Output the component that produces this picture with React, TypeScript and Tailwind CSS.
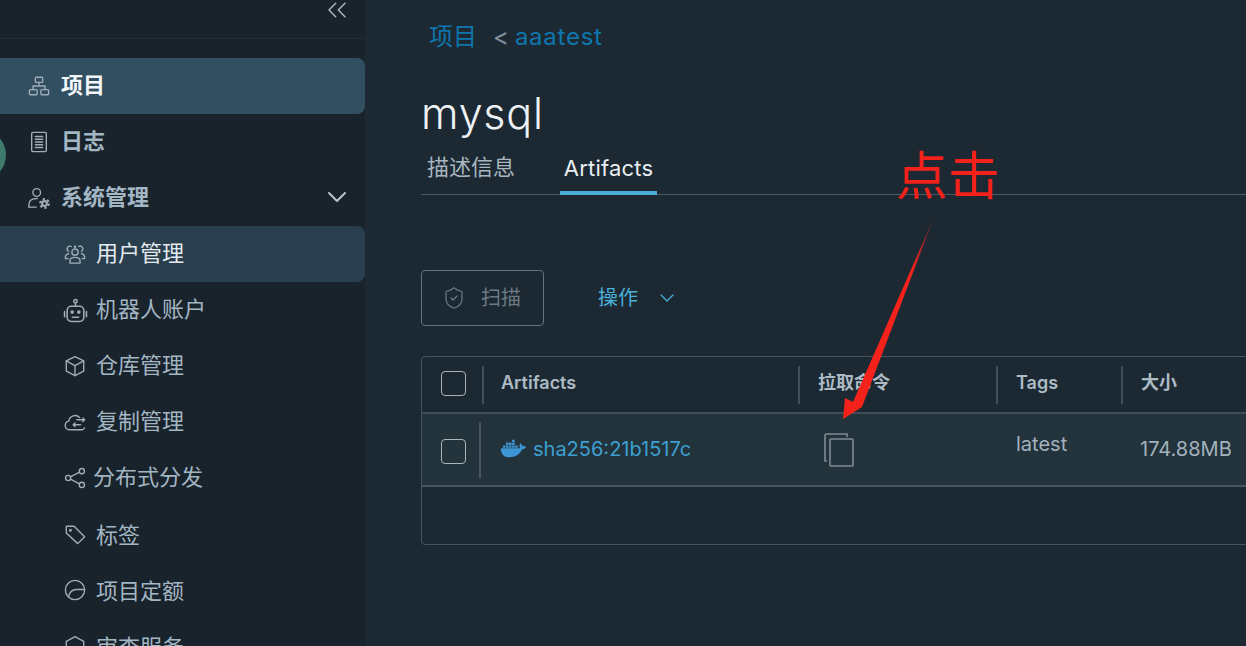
import React from "react";
import { ChevronDown, ChevronsLeft, ShieldCheck } from "lucide-react";
import { FaDocker } from "react-icons/fa";

const FONT = "font-['Inter','Noto_Sans_CJK_SC',sans-serif]";

type IconProps = { className?: string };
const base = {
  viewBox: "0 0 24 24",
  fill: "none",
  stroke: "currentColor",
  strokeWidth: 1.5,
  strokeLinecap: "round" as const,
  strokeLinejoin: "round" as const,
};

const NetworkIcon = ({ className }: IconProps) => (
  <svg {...base} className={className}>
    <rect x="8" y="2.5" width="8" height="5.5" rx="1" />
    <rect x="1.5" y="16" width="8.5" height="5.5" rx="1" />
    <rect x="14" y="16" width="8.5" height="5.5" rx="1" />
    <path d="M12 8v4M5.5 16v-4h13v4" />
  </svg>
);
const LogIcon = ({ className }: IconProps) => (
  <svg {...base} className={className}>
    <rect x="4" y="1.5" width="16" height="21" rx="1.5" />
    <path d="M8 6h8M8 9h8M8 12h8M8 15h8M8 18h8" />
  </svg>
);
const AdminIcon = ({ className }: IconProps) => (
  <svg {...base} className={className}>
    <circle cx="9.500" cy="6" r="4.200" />
    <path d="M1 22v-3c0-4 3.500-6.500 9-6.500" />
    <path d="M1 22h8" />
    <circle cx="18" cy="18" r="3.800" fill="currentColor" stroke="none" />
    <circle cx="18" cy="18" r="4.800" strokeWidth="2.200" strokeDasharray="2.500 2.500" strokeLinecap="butt" />
    <circle cx="18" cy="18" r="1.500" fill="#19232b" stroke="none" />
  </svg>
);
const UsersIcon = ({ className }: IconProps) => (
  <svg {...base} className={className}>
    <circle cx="12" cy="10" r="3.400" />
    <path d="M6.500 22v-2.500c0-2.500 2-3.800 5.500-3.800s5.500 1.300 5.500 3.800V22z" />
    <path d="M8 3.800a3 3 0 0 0-3 5.200M16 3.800a3 3 0 0 1 3 5.200M5 11.500c-2 .5-3.500 1.800-3.500 4v1.500h3M19 11.500c2 .5 3.500 1.800 3.500 4v1.500h-3" />
    <circle cx="12" cy="4" r=".6" />
  </svg>
);
const RobotIcon = ({ className }: IconProps) => (
  <svg {...base} className={className}>
    <circle cx="12" cy="3" r="1.600" />
    <path d="M12 4.600V8" />
    <rect x="4" y="8" width="16" height="14.500" rx="4" />
    <path d="M1.500 13v5M22.500 13v5M9 18.500h6" />
    <circle cx="8.800" cy="13.500" r="1" fill="currentColor" />
    <circle cx="15.200" cy="13.500" r="1" fill="currentColor" />
  </svg>
);
const BoxIcon = ({ className }: IconProps) => (
  <svg {...base} className={className}>
    <path d="M12 1.800 21.500 6.500v11L12 22.500 2.500 17.500v-11z" />
    <path d="M2.500 6.500 12 11.500l9.500-5M12 11.500v11" />
  </svg>
);
const CloudIcon = ({ className }: IconProps) => (
  <svg {...base} className={className}>
    <path d="M16 20.500H6a4.800 4.800 0 0 1-.8-9.500 7 7 0 0 1 11.800-4" />
    <path d="M16 20.500h3.500a3.500 3.500 0 0 0 2.800-2" />
    <path d="M14 9.500h8.500M20.500 7.500l2 2-2 2M18 15H10M12 13l-2 2 2 2" />
  </svg>
);
const ShareIcon = ({ className }: IconProps) => (
  <svg {...base} className={className}>
    <circle cx="19.500" cy="4.500" r="2.800" />
    <circle cx="4.500" cy="12" r="2.800" />
    <circle cx="19.500" cy="19.500" r="2.800" />
    <path d="M7 10.700l10-5M7 13.300l10 5" />
  </svg>
);
const TagIcon = ({ className }: IconProps) => (
  <svg {...base} className={className}>
    <path d="M2.500 3.500h8.500L22.500 15 15 22.500 2.500 11z" />
    <circle cx="7" cy="8" r=".9" />
  </svg>
);
const QuotaIcon = ({ className }: IconProps) => (
  <svg {...base} className={className}>
    <circle cx="12" cy="12" r="10.500" />
    <path d="M5 19.500c1-5 4-8 8.500-8H22" />
  </svg>
);
const HexIcon = ({ className }: IconProps) => (
  <svg {...base} className={className}>
    <path d="M12 1.800 21.500 7v10L12 22.500 2.500 17V7z" />
  </svg>
);
const CopyIcon = ({ className }: IconProps) => (
  <svg viewBox="0 0 30 34" fill="none" stroke="currentColor" strokeWidth="1.600" className={className}>
    <path d="M3 28H1V2.500A1.500 1.500 0 0 1 2.500 1H23v3" />
    <rect x="6" y="6" width="23" height="27" rx="1" />
  </svg>
);

type NavProps = {
  icon: React.ReactNode;
  label: string;
  active?: "top" | "sub";
  sub?: boolean;
  bold?: boolean;
  tight?: boolean;
  chevron?: boolean;
  low?: boolean;
};

function NavItem({ icon, label, active, sub, bold, tight, chevron, low }: NavProps) {
  return (
    <div
      className={`relative flex h-14 shrink-0 items-center rounded-r-lg text-[22px] ${
        sub ? "pl-[64px]" : "pl-[28px]"
      } ${active === "top" ? "bg-[#324f62] text-[#f4f7f9]" : ""} ${
        active === "sub" ? "bg-[#2a3f4e] text-[#e4ebf0]" : ""
      } ${!active ? "text-[#a3b6c4]" : ""} ${bold ? "font-bold" : ""}`}
    >
      <span className="flex h-[22px] w-[22px] shrink-0 items-center justify-center text-[#a0adb6]">{icon}</span>
      <span className={`${tight ? "ml-[7px]" : bold ? "ml-[11px]" : "ml-[10px]"} ${low ? "pt-[2px]" : "pb-[2px]"}`}>{label}</span>
      {chevron && <ChevronDown className="absolute right-[12px] top-[11px] h-8 w-8 text-[#b8c4cc]" strokeWidth={1.5} />}
    </div>
  );
}

const headCell = "flex h-[38px] items-center border-l-2 border-[#414f5a] pb-[4px]";

export default function App() {
  const ic = "h-[22px] w-[22px]";
  return (
    <div className={`relative flex h-[646px] w-[1246px] overflow-hidden bg-[#1c2933] ${FONT}`}>
      {/* sidebar */}
      <aside className="relative flex w-[365px] shrink-0 flex-col overflow-hidden bg-[#19232b]">
        <div className="flex h-[39px] shrink-0 items-start justify-end border-b border-[#212e38] pr-[12px]">
          <ChevronsLeft className="-mt-[6px] h-8 w-8 text-[#aab8c2]" strokeWidth={1.1} />
        </div>
        <div className="flex flex-col pt-[19px]">
          <NavItem icon={<NetworkIcon className={ic} />} label="项目" active="top" bold />
          <NavItem icon={<LogIcon className={ic} />} label="日志" bold />
          <NavItem icon={<AdminIcon className={ic} />} label="系统管理" bold chevron />
          <NavItem icon={<UsersIcon className={ic} />} label="用户管理" active="sub" sub />
          <NavItem icon={<RobotIcon className="h-[25px] w-[25px] shrink-0" />} label="机器人账户" sub />
          <NavItem icon={<BoxIcon className={ic} />} label="仓库管理" sub />
          <NavItem icon={<CloudIcon className={ic} />} label="复制管理" sub />
          <NavItem icon={<ShareIcon className={ic} />} label="分布式分发" sub tight />
          <NavItem icon={<TagIcon className={ic} />} label="标签" sub low />
          <NavItem icon={<QuotaIcon className={ic} />} label="项目定额" sub low />
          <NavItem icon={<HexIcon className={ic} />} label="审查服务" sub low />
        </div>
        <div className="absolute left-[-46px] top-[129px] h-[52px] w-[52px] rounded-full bg-[#3f7a6c]" />
      </aside>

      {/* main */}
      <main className="flex min-w-0 flex-1 flex-col overflow-hidden pl-[56px]">
        <div className="flex h-[37px] shrink-0 items-center pl-[8px] pt-[36px] text-[24px] text-[#0f76ad]">
          <span>项目</span>
          <span className="ml-[16px] text-[#83929d]">&lt;</span>
          <span className="ml-[6px] tracking-[0.75px]">aaatest</span>
        </div>
        <h1 className="mt-[50px] h-[52px] shrink-0 text-[43px] font-light leading-[52px] tracking-[0.8px] text-[#eef2f5]">mysql</h1>
        <div className="mt-[10px] flex h-[46px] w-[900px] shrink-0 border-b border-[#4b5a66] text-[22px]">
          <span className="ml-[6px] pt-[2px] text-[#a9b6c0]">描述信息</span>
          <span className="relative ml-[45px] h-[46px] w-[97px] pt-[3px] text-center tracking-[0.2px] text-[#e8edf1]">
            Artifacts
            <span className="absolute inset-x-0 bottom-0 h-[4px] bg-[#49afd9]" />
          </span>
        </div>

        <div className="mt-[75px] flex h-[56px] shrink-0 items-center">
          <div className="flex h-[56px] w-[123px] items-center rounded border border-[#66727c] pl-[20px] text-[#6d7a84]">
            <ShieldCheck className="h-[26px] w-[24px]" strokeWidth={1.2} />
            <span className="ml-[15px] text-[20px]">扫描</span>
          </div>
          <span className="ml-[54px] text-[20px] text-[#4aaed9]">操作</span>
          <ChevronDown className="ml-[17px] mb-[1px] h-6 w-6 text-[#4aaed9]" strokeWidth={1.3} />
        </div>

        <section className="mt-[30px] h-[189px] w-[900px] shrink-0 rounded border border-[#47545f]">
          <div className="grid h-[57px] grid-cols-[60px_316px_198px_125px_1fr] items-center border-b-2 border-[#3f4e59] text-[18px] font-semibold text-[#adbbc5]">
            <div className="flex h-[38px] items-center pl-[19px]">
              <span className="-mt-[3px] h-[25px] w-[25px] rounded border-[1.5px] border-[#a9b4bc]" />
            </div>
            <div className={`${headCell} pl-[17px]`}>Artifacts</div>
            <div className={`${headCell} pl-[18px]`}>拉取命令</div>
            <div className={`${headCell} pl-[18px]`}>Tags</div>
            <div className={`${headCell} pl-[18px]`}>大小</div>
          </div>
          <div className="grid h-[73px] grid-cols-[60px_316px_198px_125px_1fr] items-center border-b-2 border-[#47545f] bg-[#22333c] text-[20px]">
            <div className="flex h-[56px] items-center justify-between pl-[19px] pr-[1px]">
              <span className="mt-[4px] h-[25px] w-[25px] rounded border-[1.5px] border-[#a9b4bc]" />
              <span className="h-[56px] w-[2px] bg-[#46555f]" />
            </div>
            <div className="flex items-center pb-[2px] pl-[19px] text-[#3d9fd0]">
              <FaDocker className="h-[25px] w-[25px] text-[#3d95d3]" />
              <span className="ml-[7px]">sha256:21b1517c</span>
            </div>
            <div className="flex items-center pl-[26px] text-[#7f8b94]">
              <CopyIcon className="h-[34px] w-[30px]" />
            </div>
            <div className="-mt-[11px] pl-[20px] text-[#a3b2bd]">latest</div>
            <div className="pb-[2px] pl-[19px] text-[#a3b2bd]">174.88MB</div>
          </div>
        </section>
      </main>

      {/* annotation */}
      <span className="absolute left-[896px] top-[142px] text-[52px] leading-[70px] text-[#f5221b]">点击</span>
      <svg className="absolute left-0 top-0 h-[646px] w-[1246px]" viewBox="0 0 1246 646">
        <defs>
          <linearGradient id="fade" x1="933" y1="216" x2="845" y2="418" gradientUnits="userSpaceOnUse">
            <stop offset="0" stopColor="#f5221b" stopOpacity="0.2" />
            <stop offset="0.25" stopColor="#f5221b" />
          </linearGradient>
        </defs>
        <polygon points="934,217 862,407 843,419 845,398 853,402" fill="url(#fade)" />
      </svg>
    </div>
  );
}
